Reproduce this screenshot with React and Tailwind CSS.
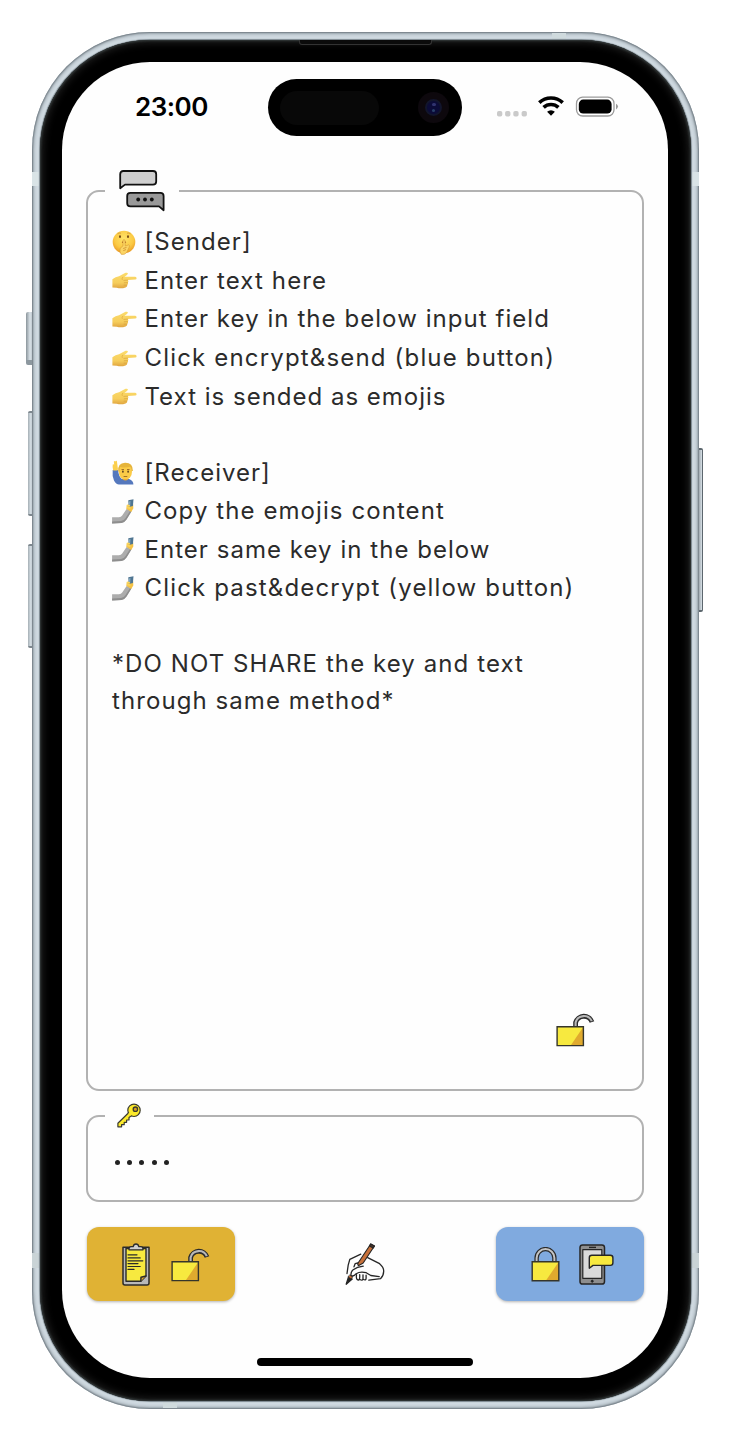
import React from "react";

const INK = "#2b2b2b";

function ChatIcon() {
  return (
    <svg className="block h-[42px] w-[46px]" viewBox="0 0 46 42" fill="none" stroke="#111" strokeWidth="1.8" strokeLinejoin="round">
      <path d="M1.2 18.3V4.2Q1.2 1 4.4 1H34Q37.2 1 37.2 4.2V11.4Q37.2 14.6 34 14.6H6Z" fill="#cfcfcf" />
      <path d="M44.6 40.2V26Q44.6 22.8 41.4 22.8H11.4Q8.2 22.8 8.2 26V33.2Q8.2 36.4 11.4 36.4H40Z" fill="#999" />
      <g fill="#111" stroke="none">
        <circle cx="19.2" cy="29.5" r="1.9" /><circle cx="26" cy="29.5" r="1.9" /><circle cx="32.8" cy="29.5" r="1.9" />
      </g>
    </svg>
  );
}

function KeyIcon() {
  return (
    <svg className="block h-[25px] w-[25px]" viewBox="0 0 25 25" stroke="#3a3a30" strokeWidth="1.2" strokeLinejoin="round">
      <path d="M11.6 9.8L.9 20.2V23.8H4.6V21.7H7.2V19.3H9.6V17H12V14.6L14.4 12.8Z" fill="#fcea2b" />
      <circle cx="17" cy="7.3" r="6.2" fill="#fcea2b" />
      <path d="M11.6 10.4L13.9 12.5" stroke="#fcea2b" strokeWidth="2.2" />
      <circle cx="18.4" cy="6.2" r="2.2" fill="#d8a022" strokeWidth="1.3" />
    </svg>
  );
}

function OpenLock() {
  return (
    <svg className="block h-[35px] w-[39px]" viewBox="0 0 39 35" fill="none">
      <path d="M19.6 14.5V10.5A8.6 8.6 0 0 1 36 10" stroke={INK} strokeWidth="4.8" />
      <path d="M19.6 14.5V10.5A8.6 8.6 0 0 1 35.8 9.2" stroke="#b8b8b8" strokeWidth="2.1" />
      <path d="M1.1 14.8H27.4V33.6H1.1Z" fill="#f7e93f" />
      <path d="M27.4 14.8V33.6H14.7Z" fill="#e0aa2e" />
      <path d="M1.1 14.8H27.4V33.6H1.1Z" stroke="#35352b" strokeWidth="1.4" />
    </svg>
  );
}

function ClosedLock() {
  return (
    <svg className="block h-[35px] w-[29px]" viewBox="0 0 29 35" fill="none">
      <path d="M5.6 15V11A8.9 8.9 0 0 1 23.4 11V15" stroke={INK} strokeWidth="4.4" />
      <path d="M5.6 15V11A8.9 8.9 0 0 1 23.4 11V15" stroke="#c4c4c4" strokeWidth="2" />
      <path d="M1.2 14.8H27.8V33.8H1.2Z" fill="#f7e93f" />
      <path d="M27.8 14.8V33.8H14.8Z" fill="#e0aa2e" />
      <path d="M1.2 14.8H27.8V33.8H1.2Z" stroke="#35352b" strokeWidth="1.4" />
    </svg>
  );
}

function Clipboard() {
  return (
    <svg className="block h-[43px] w-[28px]" viewBox="0 0 28 43" stroke={INK} strokeLinejoin="round" strokeLinecap="round">
      <path d="M1 4.2H27V40Q27 42 25 42H3Q1 42 1 40Z" fill="#b9b9b9" strokeWidth="1.5" />
      <path d="M4 5.5H24V33L18.8 38.3H4Z" fill="#f7e93f" strokeWidth="1.4" />
      <path d="M18.8 38.3L19 34.2 24 33" fill="#e0aa2e" strokeWidth="1.5" />
      <path d="M7 5.8Q7 3.7 9.5 3.7H11.2Q11.7 1 14 1T16.8 3.7H18.5Q21 3.7 21 5.8V6.8H7Z" fill="#cfcfcf" strokeWidth="1.3" />
      <path d="M6 11.8H15M6 14.9H18.2M6 17.8H20.8M6 20.6H16M6 23.5H18.2M6 26.4H12" strokeWidth="1.2" />
    </svg>
  );
}

function PhoneMessage() {
  return (
    <svg className="block h-[41px] w-[35px]" viewBox="0 0 35 41" stroke="#262626" strokeLinejoin="round">
      <rect x="1" y="1" width="24.5" height="39" rx="2.6" fill="#8e8e8e" strokeWidth="1.5" />
      <path d="M3.8 5.7H22.8V34.3H3.8Z" fill="#dadada" strokeWidth="1.2" />
      <path d="M10 3.4H17" strokeWidth="1.4" />
      <circle cx="13.2" cy="37.2" r="1.1" fill="#222" strokeWidth=".8" />
      <path d="M10.3 24.2V13.8Q10.3 11.2 12.9 11.2H31.3Q33.9 11.2 33.9 13.8V18.8Q33.9 21.4 31.3 21.4H14Z" fill="#f7e93f" strokeWidth="1.4" />
    </svg>
  );
}

function WritingHand() {
  return (
    <svg className="block h-[42px] w-[40px]" viewBox="0 0 40 42" fill="none" stroke="#262626" strokeWidth="1.3" strokeLinecap="round" strokeLinejoin="round">
      <path d="M15.8 11.2L4.8 16.3 3.2 22.2 2 30.5" />
      <path d="M22.7 14.6L34.6 20.7Q38.9 24.4 38.7 28.3 38.6 32.8 35.5 35.7L23.8 37.1" />
      <path d="M25.7 1L29.4 3 18.2 20 13.4 22.7 12.6 20.7Z" fill="#c8713a" strokeWidth="1.1" />
      <path d="M25.7 1L29.4 3 28.2 5 24.5 3Z" fill="#4a342a" />
      <path d="M3.5 34L7.2 36.1 1.2 41.2Z" fill="#222" />
      <path d="M5 32L7.8 33.7 6.2 36 3.4 34Z" fill="#c06a31" strokeWidth=".7" />
      <path d="M9 23.8L10.2 20.6 13 19.8M18.2 23.2Q12 24 8.2 26.8 5.5 29 6 32.5 8.5 34 11.2 30.7 15 28.3 21.2 29.7L25.8 32.5 34.2 33.6" />
      <path d="M11.5 31.7Q10.7 37.3 13.7 37 15 36.4 14.7 31.7M14.9 36.5Q17.6 38.2 18 35.8V31.8M18.5 36.5Q21.4 37.6 21.1 34.8V32.2" />
    </svg>
  );
}

function ShushEmoji() {
  return (
    <svg className="block h-[25px] w-[24px]" viewBox="0 0 24 25">
      <defs>
        <radialGradient id="shush" cx=".5" cy=".35" r=".65">
          <stop offset="0" stopColor="#ffe36a" /><stop offset=".65" stopColor="#fbc943" /><stop offset="1" stopColor="#e99a25" />
        </radialGradient>
      </defs>
      <circle cx="12" cy="12" r="11.3" fill="url(#shush)" />
      <ellipse cx="8" cy="6.7" rx="1" ry="1.4" fill="#7a4d16" /><ellipse cx="16" cy="6.7" rx="1" ry="1.4" fill="#7a4d16" />
      <path d="M5.5 3.8Q7 2.5 9 3.2M15 3.2Q17 2.5 18.5 3.8" stroke="#d09030" strokeWidth=".7" fill="none" />
      <ellipse cx="12" cy="12.3" rx="2.2" ry="1" fill="#a8601f" />
      <path d="M11 10.2Q12 8.8 13 10.2L13.3 16 16.8 14.8Q18.4 15.2 17 17.6L14.7 22.5Q12.5 25.2 9.2 24.3 7.4 22 8.2 18.2L10.9 16Z" fill="#fbd565" stroke="#d69a35" strokeWidth=".6" />
      <path d="M11.2 18.5L14.5 17.4M11.3 20.6L14 19.6" stroke="#c78326" strokeWidth=".7" />
    </svg>
  );
}

function PointEmoji() {
  return (
    <svg className="block h-[17px] w-[25px]" viewBox="0 0 25 17">
      <defs>
        <linearGradient id="point" x1="0" y1="0" x2="0" y2="1">
          <stop offset="0" stopColor="#fbdc6c" /><stop offset=".65" stopColor="#f6cd5b" /><stop offset="1" stopColor="#e0a540" />
        </linearGradient>
      </defs>
      <path d="M.4 7.2Q3.5 4.8 7 4.3L13.5.8Q16 .2 15.9 1.8 15.8 2.8 12.5 4.8L23.2 4.8Q24.6 5 24.6 6.2T23.2 7.5L15.9 8.1Q17 9.3 15.9 10.6 16.6 12 15.2 13.1 15.6 14.7 13.6 15.4 9 17 4.8 15.7L.4 15.5Z" fill="url(#point)" />
      <path d="M15.9 8.1L11.5 8.4M15.9 10.6L11.8 10.8M15.2 13.1L11.6 13.1" stroke="#d09a38" strokeWidth=".6" fill="none" />
      <path d="M11 4.9Q9.6 6.3 10.3 7.8" stroke="#d79d32" strokeWidth=".6" fill="none" />
    </svg>
  );
}

function RaiseHandEmoji() {
  return (
    <svg className="block h-[25px] w-[22px]" viewBox="0 0 22 25">
      <path d="M.7 10Q0 16 2 20.5 4 24.3 7 24.6H21.4Q21.5 20.6 17 19L10 19Q6.5 16.5 6.1 10Z" fill="#5578bd" />
      <path d="M1.2 10.5Q.2 7.4.8 4.3L2.2 4.5 1.8 1.4Q2.8.4 3.4 1.6L4 .8Q5 .5 5 2L5.6 6.5Q6.3 9 5.5 10.5Z" fill="#fbcf4c" />
      <ellipse cx="13.4" cy="11.8" rx="6.6" ry="8" fill="#fbcb47" />
      <path d="M6.2 11.4Q5.5 3.2 13 2.8 21 2.6 20.9 11L19.6 11Q19.4 7.6 17.8 6.7 12.6 8 8.5 6.9 7.4 8.5 7.4 11.4Z" fill="#e6b43a" />
      <ellipse cx="10.9" cy="11.7" rx=".8" ry="1.1" fill="#4a3218" /><ellipse cx="16.1" cy="11.7" rx=".8" ry="1.1" fill="#4a3218" />
      <path d="M9.5 9.5H12M15 9.5H17.5M11.6 16.5H15.3" stroke="#8d5a1c" strokeWidth=".8" />
      <path d="M10.4 19Q13.5 22 16.3 19Z" fill="#e7aa36" />
    </svg>
  );
}

function SelfieEmoji() {
  return (
    <svg className="block h-[25px] w-[22px]" viewBox="0 0 22 25">
      <path d="M.1 18.3H7Q9 18.2 10.2 16.6L14.8 9.8 19.4 12.6 14.5 20.6Q12.6 23.6 9.5 23.9L.1 24.5Z" fill="#adadad" />
      <path d="M.1 22.6L9 22.1Q11.6 21.8 13.4 19.2L18.2 11.8 19.4 12.6 14.5 20.6Q12.6 23.6 9.5 23.9L.1 24.5Z" fill="#8e8e8e" />
      <path d="M14.3 9.7L14.8 6.3 17 5.5 21.2 5.2 21.3 9.4 19.2 12.9Z" fill="#f5c244" />
      <path d="M16.3 1.3L21.5.3 20.9 7 16.7 8Z" fill="#4f7591" />
      <path d="M17 2.4L18.5 2 18.2 6.8 17.2 7.1Z" fill="#86acc2" />
      <path d="M14.8 6.4L18 7M15.2 8.4L18.4 9.2" stroke="#fbd55c" strokeWidth="1.6" />
    </svg>
  );
}

const EMOJI = {
  shush: <ShushEmoji />,
  point: <PointEmoji />,
  raise: <RaiseHandEmoji />,
  selfie: <SelfieEmoji />,
};

const LINES = [
  ["shush", "[Sender]", "tracking-[1.05px]"],
  ["point", "Enter text here", "tracking-[1.1px]"],
  ["point", "Enter key in the below input field", "tracking-[1.06px]"],
  ["point", "Click encrypt&send (blue button)", "tracking-[1.17px]"],
  ["point", "Text is sended as emojis", "tracking-[1px]"],
  null,
  ["raise", "[Receiver]", "tracking-[1.02px]"],
  ["selfie", "Copy the emojis content", "tracking-[1.08px]"],
  ["selfie", "Enter same key in the below", "tracking-[1.04px]"],
  ["selfie", "Click past&decrypt (yellow button)", "tracking-[1.16px]"],
  null,
];

function StatusBar() {
  return (
    <header className="flex h-[90px] items-start pt-[17px]">
      <div className="w-[206px] pl-[73px] pt-[10px] text-[26px] leading-[36px] font-semibold tracking-[-0.5px] text-black">23:00</div>
      <div className="flex h-[57px] w-[194px] items-center justify-between rounded-full bg-black pr-[13px] pl-3">
        <div className="h-[34px] w-[99px] rounded-full bg-[#080808]" />
        <div className="flex h-[31px] w-[31px] items-center justify-center rounded-full bg-[#0d080d]">
          <div className="flex h-[17px] w-[17px] flex-col items-center justify-center gap-[3px] rounded-full border-2 border-[#12152c] bg-[#0b0b38]">
            <div className="h-[3px] w-[4px] rounded-full bg-[#30336e]" />
            <div className="h-[3px] w-[3px] rounded-full bg-[#284068]" />
          </div>
        </div>
      </div>
      <div className="flex pl-[35px] pt-[17px]">
        <svg className="mt-[15px] h-[6px] w-[31px]" viewBox="0 0 31 6" fill="#cacaca">
          <rect x="0" y="0" width="5.3" height="5.6" rx="1.8" />
          <rect x="8.1" y="0" width="5.3" height="5.6" rx="1.8" />
          <rect x="16.3" y="0" width="5.3" height="5.6" rx="1.8" />
          <rect x="24.6" y="0" width="5.3" height="5.6" rx="1.8" />
        </svg>
        <svg className="ml-[10px] h-[20px] w-[26px]" viewBox="0 0 26 20" fill="none" stroke="#000" strokeWidth="3.6">
          <path d="M1.3 6.6A17 17 0 0 1 24.7 6.6" />
          <path d="M5.6 11.4A10.8 10.8 0 0 1 20.4 11.4" />
          <path d="M9.1 15.8A5.6 5.6 0 0 1 16.9 15.8L13 19.8Z" fill="#000" stroke="none" />
        </svg>
        <svg className="ml-[10.5px] h-[21px] w-[44px]" viewBox="0 0 44 21">
          <rect x="1.5" y="1.2" width="37.5" height="18.8" rx="6.2" fill="#fff" stroke="#9b9b9b" strokeWidth="1.3" />
          <rect x="3.8" y="3.6" width="32.8" height="14" rx="4.4" fill="#000" />
          <path d="M41 7.8Q43 8.8 43 10.6T41 13.4Z" fill="#999" />
        </svg>
      </div>
    </header>
  );
}

export default function App() {
  return (
    <div className="relative h-[1440px] w-[730px] overflow-hidden bg-white pt-8 pl-8 font-['Inter','Liberation_Sans',sans-serif]">
      {/* side buttons */}
      <div className="absolute top-[312px] left-[26px] h-[53px] w-[8px] rounded-[2px] border-b-[5px] border-[#8d989f] bg-linear-to-r from-[#8b959b] via-[#d9e2e8] to-[#aab4bb]" />
      <div className="absolute top-[411px] left-[28px] h-[105px] w-[6px] rounded-[2px] border-y-2 border-[#7d878e] bg-linear-to-r from-[#a5afb5] via-[#d9e2e8] to-[#7d878e]" />
      <div className="absolute top-[544px] left-[28px] h-[104px] w-[6px] rounded-[2px] border-y-2 border-[#7d878e] bg-linear-to-r from-[#a5afb5] via-[#d9e2e8] to-[#7d878e]" />
      <div className="absolute top-[448px] left-[697px] h-[164px] w-[6px] rounded-[2px] border-y-2 border-r border-[#5d676e] bg-linear-to-r from-[#7d878e] to-[#d9e2e8]" />

      {/* metal frame */}
      <div className="relative h-[1377px] w-[667px] overflow-hidden rounded-[118px] bg-[#d3dde4] p-[8px] shadow-[inset_0_0_2px_1px_#6d777e,inset_0_0_5px_2px_#a9b4bc]">
        <div className="absolute top-[140px] left-0 h-[14px] w-2 bg-[#d9e3e6]" />
        <div className="absolute top-[140px] right-0 h-[14px] w-2 bg-[#d9e3e6]" />
        <div className="absolute top-[1221px] left-0 h-[15px] w-2 bg-[#c9d3d6]" />
        <div className="absolute top-[1221px] right-0 h-[15px] w-2 bg-[#c9d3d6]" />
        <div className="absolute top-px left-[520px] h-2 w-[14px] bg-[#cfdadd]" />
        <div className="absolute bottom-px left-[131px] h-2 w-[14px] bg-[#cfdadd]" />

        {/* bezel */}
        <div className="relative h-full w-full rounded-[110px] bg-black p-[22px] shadow-[0_0_1px_1px_#7b868d,inset_0_0_2px_1px_#333a3a,inset_0_0_8px_2px_#262626]">
          <div className="absolute top-0 left-[259px] h-[5px] w-[133px] rounded-b-[3px] border border-t-0 border-[#333] bg-[#0b0b0b]" />

          {/* screen */}
          <main className="flex h-[1316px] w-[606px] flex-col overflow-hidden rounded-[88px] bg-[#fefefe] pb-[12px]">
            <StatusBar />

            <fieldset className="mx-[24px] mt-[18px] h-[921px] min-w-0 shrink-0 rounded-[13px] border-2 border-[#b2b2b2] px-[24px] text-[24px] text-[#2b2b2b]">
              <legend className="-ml-[7px] flex h-[42px] w-[74px] justify-center">
                <ChatIcon />
              </legend>
              <div className="flex h-[877px] flex-col pt-[11px]">
                {LINES.map((line, i) =>
                  line ? (
                    <div key={i} className="flex h-[38.6px] shrink-0 items-center whitespace-nowrap">
                      <span className="flex w-[32.5px] shrink-0">{EMOJI[line[0]]}</span>
                      <span className={line[2]}>{line[1]}</span>
                    </div>
                  ) : (
                    <div key={i} className="h-[37.3px] shrink-0" />
                  )
                )}
                <p className="leading-[37.3px] tracking-[1.08px]">
                  *DO NOT SHARE the key and text
                  <br />
                  through same method*
                </p>
                <div className="mt-auto mr-[23px] mb-[42px] self-end">
                  <OpenLock />
                </div>
              </div>
            </fieldset>

            <fieldset className="mx-[24px] mt-[12px] h-[99px] min-w-0 shrink-0 rounded-[13px] border-2 border-[#b2b2b2] px-[24px]">
              <legend className="-ml-[7px] flex h-[26px] w-[49px] justify-center">
                <KeyIcon />
              </legend>
              <div className="flex gap-[7.4px] pt-[31px] pl-[2.5px]">
                <i className="h-[5px] w-[5px] rounded-full bg-[#222]" />
                <i className="h-[5px] w-[5px] rounded-full bg-[#222]" />
                <i className="h-[5px] w-[5px] rounded-full bg-[#222]" />
                <i className="h-[5px] w-[5px] rounded-full bg-[#222]" />
                <i className="h-[5px] w-[5px] rounded-full bg-[#222]" />
              </div>
            </fieldset>

            <div className="mx-[24.5px] mt-[25px] flex h-[74px] shrink-0 items-center justify-between">
              <button className="flex h-[74px] w-[148px] items-center justify-center gap-[21px] rounded-[12px] bg-[#e0b234] pl-[10px] shadow-[0_1px_3px_rgba(0,0,0,0.3)]">
                <Clipboard />
                <OpenLock />
              </button>
              <WritingHand />
              <button className="flex h-[74px] w-[148px] items-center justify-center gap-[19px] rounded-[12px] bg-[#80aadf] pl-[6px] shadow-[0_1px_3px_rgba(0,0,0,0.3)]">
                <ClosedLock />
                <PhoneMessage />
              </button>
            </div>

            <div className="mx-auto mt-auto h-[8px] w-[216px] shrink-0 rounded-full bg-black" />
          </main>
        </div>
      </div>
    </div>
  );
}
